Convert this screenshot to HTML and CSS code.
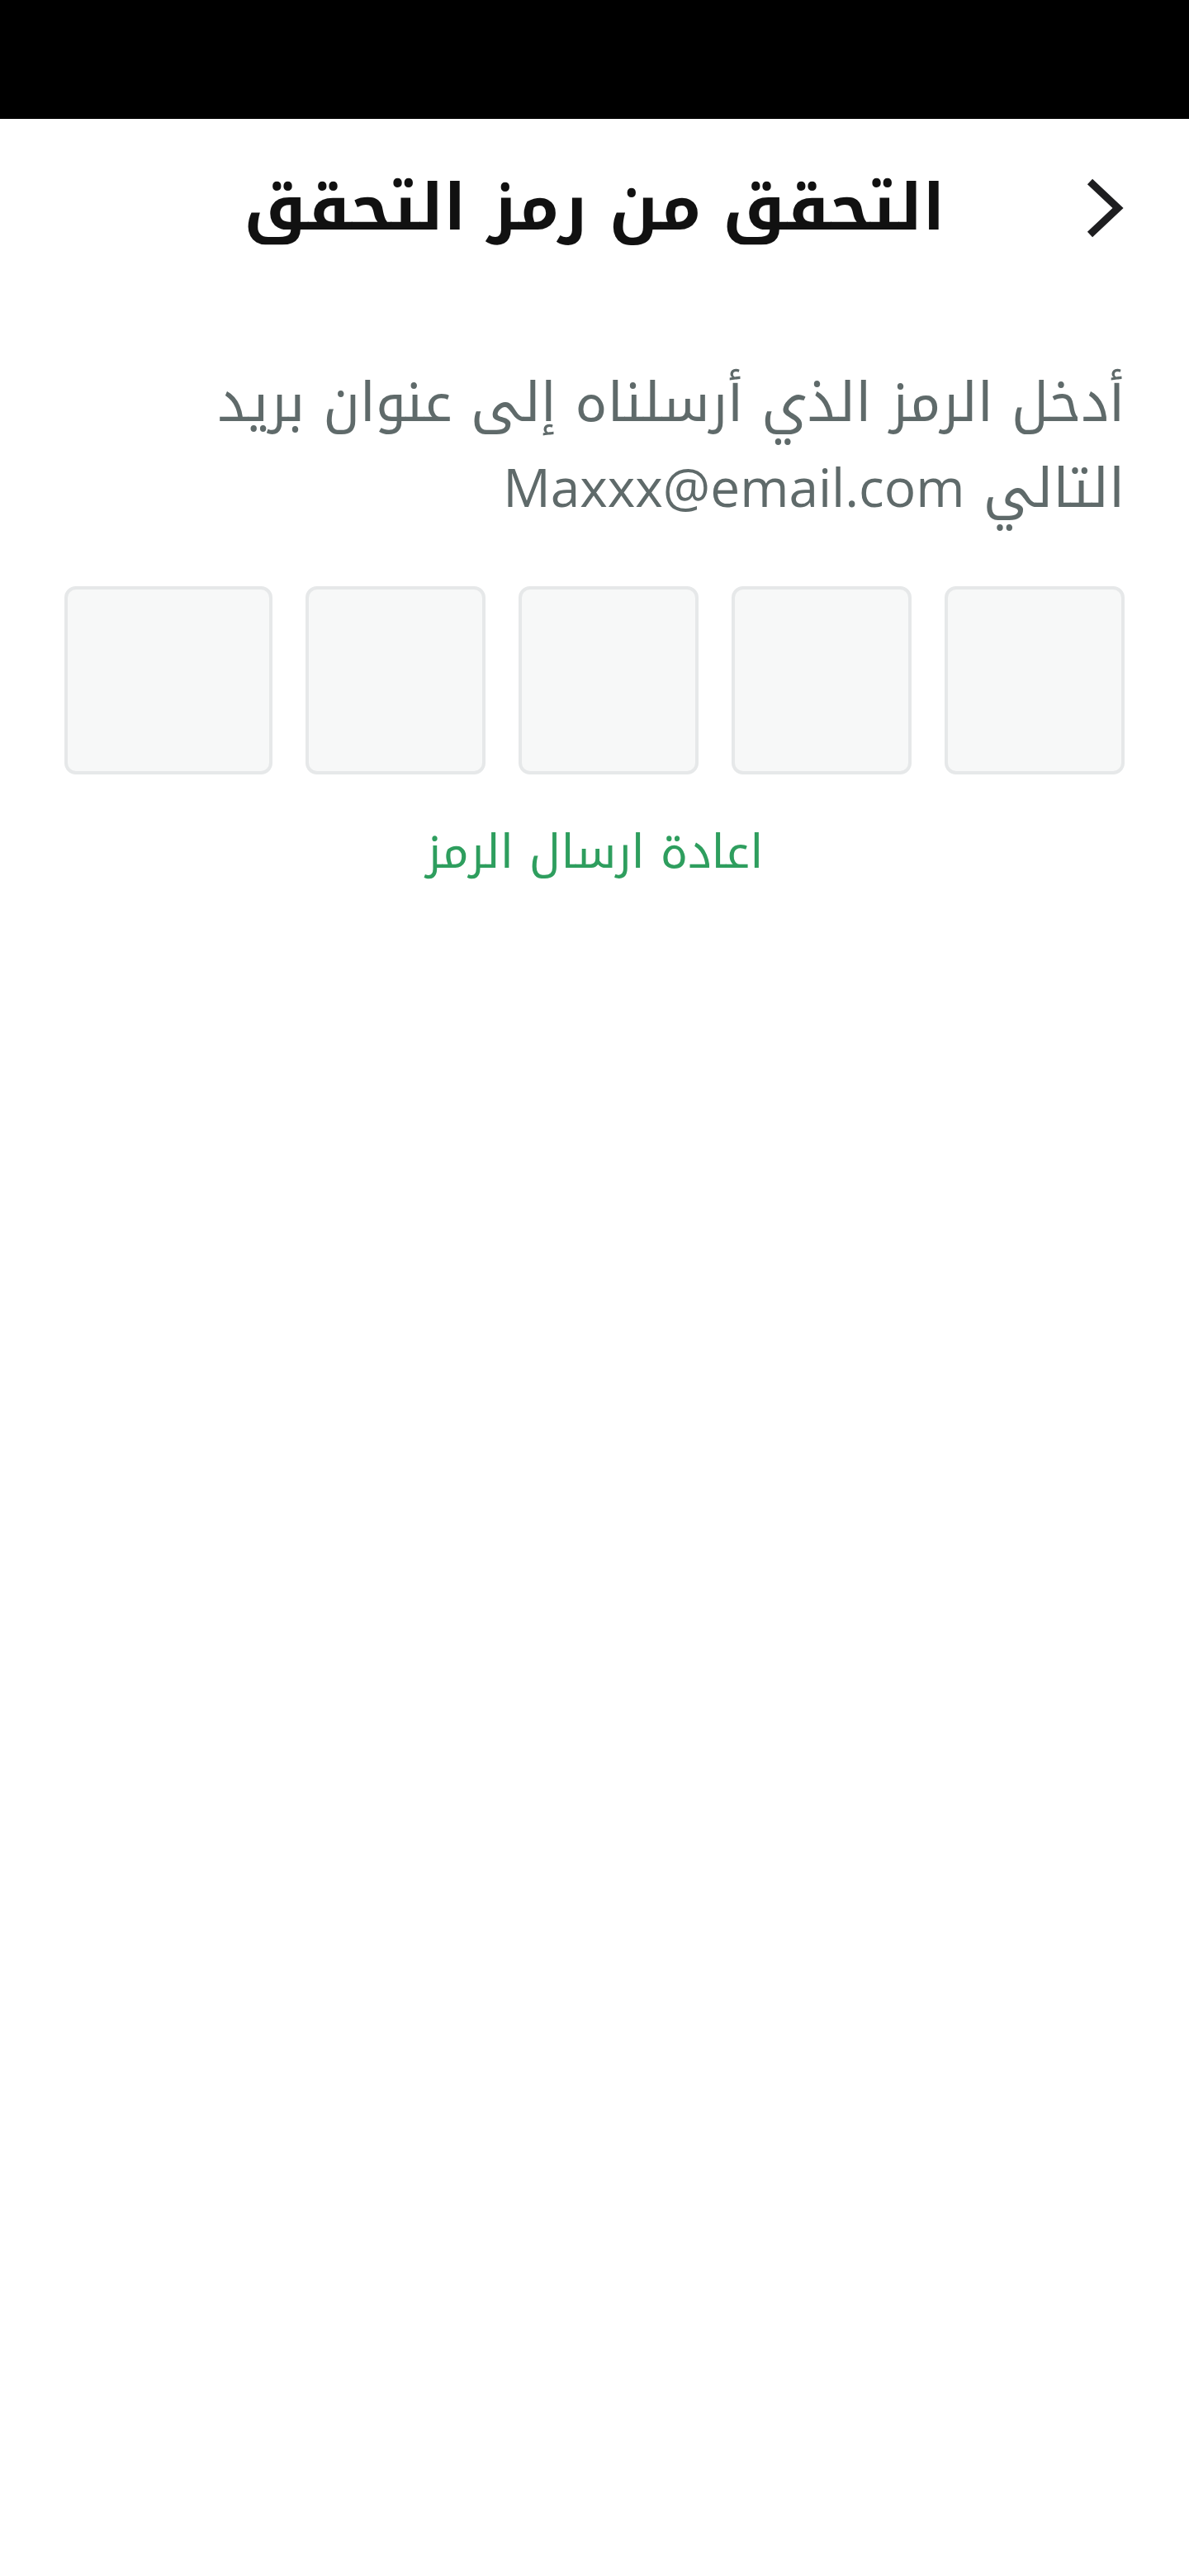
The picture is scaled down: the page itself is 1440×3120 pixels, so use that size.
FILE: index.html
```html
<!DOCTYPE html>
<html lang="ar" dir="rtl">
<head>
<meta charset="utf-8">
<title>التحقق من رمز التحقق</title>
<link rel="stylesheet" href="styles.css">
</head>
<body>
<div class="status-bar"></div>
<header class="app-header">
  <button class="back-btn" aria-label="رجوع">
    <svg width="48" height="76" viewBox="0 0 48 76"><path d="M6 6 L40 38 L6 70" fill="none" stroke="#1e1e20" stroke-width="9" stroke-linejoin="miter"/></svg>
  </button>
  <h1 class="title">التحقق من رمز التحقق</h1>
  <span class="spacer"></span>
</header>
<main class="content">
  <p class="intro"><span class="line">أدخل الرمز الذي أرسلناه إلى عنوان بريد</span><span class="line">التالي <span class="email">Maxxx@email.com</span></span></p>
  <div class="otp-row">
    <div class="otp-box"></div>
    <div class="otp-box"></div>
    <div class="otp-box"></div>
    <div class="otp-box"></div>
    <div class="otp-box"></div>
  </div>
  <a class="resend" href="#">اعادة ارسال الرمز</a>
</main>
</body>
</html>
```
FILE: styles.css
```css
* { box-sizing: border-box; }
html, body { margin: 0; padding: 0; background: #ffffff; }
body {
  font-family: "Noto Kufi Arabic", "Noto Sans Arabic", "DejaVu Sans", sans-serif;
  width: 1440px;
  min-height: 3120px;
}
.status-bar { height: 144px; background: #000000; }
.app-header {
  height: 216px;
  display: grid;
  grid-template-columns: 1fr auto 1fr;
  align-items: center;
  padding: 0 78px;
}
.back-btn {
  justify-self: start;
  background: none;
  border: 0;
  padding: 0;
  width: 48px;
  height: 76px;
  display: flex;
  align-items: center;
  justify-content: center;
}
.title {
  margin: 0;
  font-size: 78px;
  font-weight: 700;
  color: #111111;
  line-height: 1;
}
.content { padding: 0 78px; display: flex; flex-direction: column; }
.intro {
  margin: 78px 0 0;
  font-size: 66px;
  line-height: 101px;
  color: #5f6a6a;
}
.intro .line { display: block; height: 101px; overflow: visible; }
.email { font-family: "Open Sans", "Noto Sans", sans-serif; font-size: 64px; }
.otp-row {
  margin-top: 70px;
  display: grid;
  grid-template-columns: repeat(4, 218px) 1fr;
  column-gap: 40px;
}
.otp-box {
  height: 228px;
  background: #f7f8f8;
  border: 4px solid #e6e8e9;
  border-radius: 14px;
}
.resend {
  align-self: center;
  margin-top: 58px;
  font-size: 56px;
  color: #2e9e5e;
  text-decoration: none;
  line-height: 72px;
}
```
